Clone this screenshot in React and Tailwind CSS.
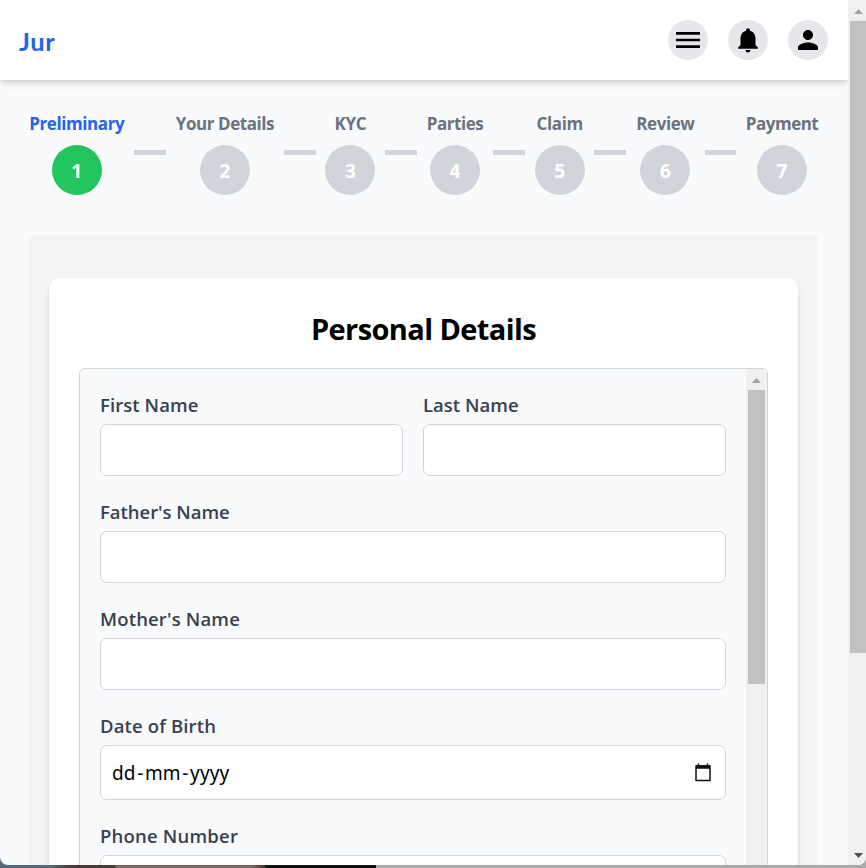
import React from "react";
import { MdMenu, MdNotifications, MdPerson } from "react-icons/md";

const steps = [
  { label: "Preliminary", width: "w-[95.5px]", tracking: "tracking-[-0.4px]", active: true },
  { label: "Your Details", width: "w-[98.5px]", tracking: "tracking-[-0.45px]" },
  { label: "KYC", width: "w-[50px]", tracking: "tracking-[-0.3px]" },
  { label: "Parties", width: "w-[57px]", tracking: "tracking-[-0.45px]" },
  { label: "Claim", width: "w-[50px]", tracking: "tracking-[-0.35px]" },
  { label: "Review", width: "w-[59px]", tracking: "tracking-[-0.4px]" },
  { label: "Payment", width: "w-[72px]", tracking: "tracking-[-0.5px]" },
];

function IconButton({ children }) {
  return (
    <button className="flex h-10 w-10 items-center justify-center rounded-full bg-[#e5e7eb] text-black">
      {children}
    </button>
  );
}

function Header() {
  return (
    <header className="flex h-20 shrink-0 items-center justify-between bg-white pr-5 pl-[19px] shadow-[0_5px_7px_-1px_rgba(0,0,0,0.12),0_2px_4px_-2px_rgba(0,0,0,0.14)]">
      <div className="pt-0.5 font-[Lato] text-[25.5px] leading-8 font-bold tracking-[0.6px] text-[#2563eb]">Jur</div>
      <div className="flex gap-5">
        <IconButton><MdMenu className="h-8 w-8" /></IconButton>
        <IconButton><MdNotifications className="h-[30px] w-[30px]" /></IconButton>
        <IconButton><MdPerson className="h-[30px] w-[30px]" /></IconButton>
      </div>
    </header>
  );
}

function Stepper() {
  return (
    <div className="flex pt-8 pr-[30px] pl-[29px]">
      {steps.map((s, i) => (
        <React.Fragment key={s.label}>
          <div className={`flex shrink-0 flex-col items-center ${s.width}`}>
            <div className={`h-[33px] text-[17px] leading-[23px] font-bold whitespace-nowrap ${s.tracking} ${s.active ? "text-[#2563eb]" : "text-[#6b7280]"}`}>
              {s.label}
            </div>
            <div className={`flex h-[50px] w-[50px] items-center justify-center rounded-full pt-0.5 text-[19px] font-bold text-white ${s.active ? "bg-[#22c55e]" : "bg-[#d1d5db]"}`}>
              {i + 1}
            </div>
          </div>
          {i < steps.length - 1 && <div className="mx-[9.7px] mt-[38px] h-[5px] flex-1 bg-[#d1d5db]" />}
        </React.Fragment>
      ))}
    </div>
  );
}

function Field({ label, tracking, children, tall }) {
  return (
    <div className="flex-1">
      <div className={`h-[31px] text-[18.5px] leading-6 font-semibold text-[#374151] ${tracking}`}>{label}</div>
      <div className={`flex items-center justify-between rounded-[7px] border border-[#d1d5db] bg-white pr-3 pl-[11px] ${tall ? "h-[55px]" : "h-[52px]"}`}>
        {children}
      </div>
    </div>
  );
}

function Arrow({ down }) {
  return down ? (
    <svg width="9" height="5" viewBox="0 0 9 5" fill="#505050"><path d="M0 0h9L4.500 5z" /></svg>
  ) : (
    <svg width="9" height="5" viewBox="0 0 9 5" fill="#a3a3a3"><path d="M0 5h9L4.500 0z" /></svg>
  );
}

function Calendar() {
  return (
    <svg className="mr-0.5" width="16" height="19" viewBox="0 0 16 19" fill="none" stroke="#101014">
      <path d="M1 3h14v14.500H1z" strokeWidth="1.500" strokeLinejoin="round" />
      <path d="M1 4h14" strokeWidth="3.500" />
      <path d="M3.500 0.500v3M12.500 0.500v3" strokeWidth="1.500" />
    </svg>
  );
}

function PersonalDetails() {
  return (
    <section className="mt-10 mr-[30px] ml-[29px] h-[700px] bg-[#f3f4f6] px-5 pt-[43px]">
      <div className="h-[700px] rounded-[10px] bg-white px-[30px] pt-8 shadow-[0_5px_8px_-1px_rgba(0,0,0,0.1),0_3px_5px_-2px_rgba(0,0,0,0.1)]">
        <h1 className="h-[58px] text-center text-[29px] leading-[38px] font-bold tracking-[-0.6px] text-black">Personal Details</h1>
        <div className="flex h-[640px] overflow-hidden rounded-[6px] border border-[#d1d5db] bg-[#f9fafb]">
          <form className="flex flex-1 flex-col gap-6 p-5 pt-6">
            <div className="flex gap-5">
              <Field label="First Name" tracking="tracking-[0.08px]" />
              <Field label="Last Name" tracking="tracking-[0.02px]" />
            </div>
            <div className="flex"><Field label="Father's Name" tracking="tracking-[-0.03px]" /></div>
            <div className="flex"><Field label="Mother's Name" tracking="tracking-[0.16px]" /></div>
            <div className="flex">
              <Field label="Date of Birth" tracking="tracking-[0.14px]" tall>
                <span className="pt-0.5 font-['Noto_Sans'] text-[19px] tracking-[0.15px] whitespace-nowrap text-black">
                  dd<span className="mx-[1.500px]">-</span>mm<span className="mx-[1.500px]">-</span>yyyy
                </span>
                <Calendar />
              </Field>
            </div>
            <div className="flex"><Field label="Phone Number" tracking="tracking-[0.2px]" /></div>
          </form>
          <div className="flex w-[21px] flex-col items-center bg-[#f0f0f0]">
            <div className="flex h-[21px] items-center pt-0.5"><Arrow /></div>
            <div className="h-[294px] w-[17px] bg-[#c1c1c1]" />
          </div>
        </div>
      </div>
    </section>
  );
}

export default function App() {
  return (
    <div className="flex h-[868px] w-[866px] flex-col overflow-hidden bg-[linear-gradient(90deg,#596878_0_50px,#4a3b38_70px_115px,#80675f_116px_250px,#49352f_265px,#111_266px_376px,#aaa_376px)] font-['Open_Sans','Noto_Sans',sans-serif]">
      <div className="flex h-[865px] overflow-hidden rounded-b-[8px] bg-[#f9fafb]">
        <main className="flex w-[848px] flex-col overflow-hidden">
          <Header />
          <Stepper />
          <PersonalDetails />
        </main>
        <div className="flex w-[18px] flex-col bg-[#f0f0f0]">
          <div className="flex h-[21px] items-center pt-0.5 pl-1.5"><Arrow /></div>
          <div className="ml-0.5 h-[632px] bg-[#c1c1c1]" />
          <div className="flex flex-1 items-end pb-[7px] pl-1.5"><Arrow down /></div>
        </div>
      </div>
    </div>
  );
}
